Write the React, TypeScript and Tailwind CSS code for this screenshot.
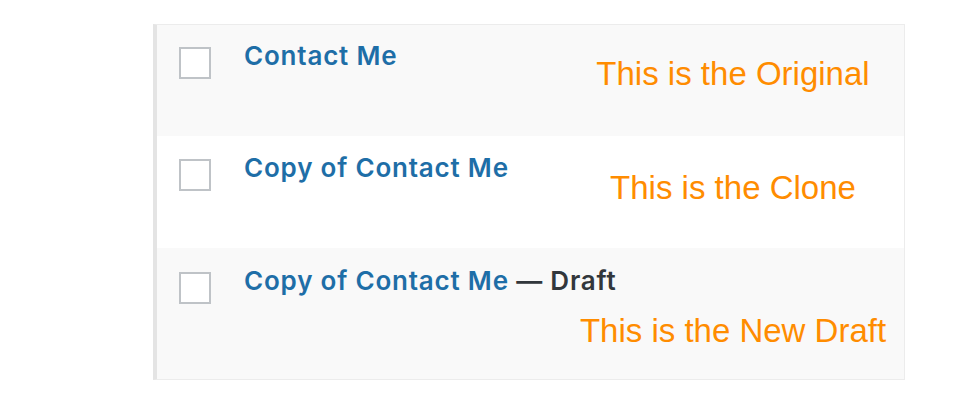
import React from "react";

const titleFont = { fontFamily: "Inter, 'Liberation Sans', sans-serif" };

function Checkbox() {
  return <div className="mt-[4px] h-[32px] w-[32px] shrink-0 border-2 border-[#bfc3c7] bg-white" />;
}

function Title({ children }: { children: React.ReactNode }) {
  return (
    <div style={titleFont} className="ml-[33px] whitespace-nowrap text-[26px] font-semibold leading-[26px] tracking-[0.8px] text-[#1e6ea7]">
      {children}
    </div>
  );
}

function Note({ children }: { children: React.ReactNode }) {
  return (
    <div className="w-[342px] shrink-0 text-center text-[33px] leading-none text-[#ff8c00] [font-family:'Liberation_Sans',Arial,sans-serif]">
      {children}
    </div>
  );
}

export default function App() {
  return (
    <div className="h-[404px] w-[976px] bg-white">
      <div className="ml-[153px] pt-[24px]">
        <div className="w-[752px] border border-[#ececec] border-l-4 border-l-[#e4e4e4]">
          <div className="flex h-[111px] bg-[#f9f9f9]">
            <div className="flex flex-1 pl-[22px] pt-[18px]">
              <Checkbox />
              <Title>Contact Me</Title>
            </div>
            <div className="pt-[32px]">
              <Note>This is the Original</Note>
            </div>
          </div>
          <div className="flex h-[112px] bg-white">
            <div className="flex flex-1 pl-[22px] pt-[19px]">
              <Checkbox />
              <Title>Copy of Contact Me</Title>
            </div>
            <div className="pt-[35px]">
              <Note>This is the Clone</Note>
            </div>
          </div>
          <div className="flex h-[131px] flex-col bg-[#f9f9f9]">
            <div className="flex pl-[22px] pt-[20px]">
              <Checkbox />
              <Title>
                Copy of Contact Me <span className="text-[#32373c]">— Draft</span>
              </Title>
            </div>
            <div className="mt-[10px] self-end">
              <Note>This is the New Draft</Note>
            </div>
          </div>
        </div>
      </div>
    </div>
  );
}
